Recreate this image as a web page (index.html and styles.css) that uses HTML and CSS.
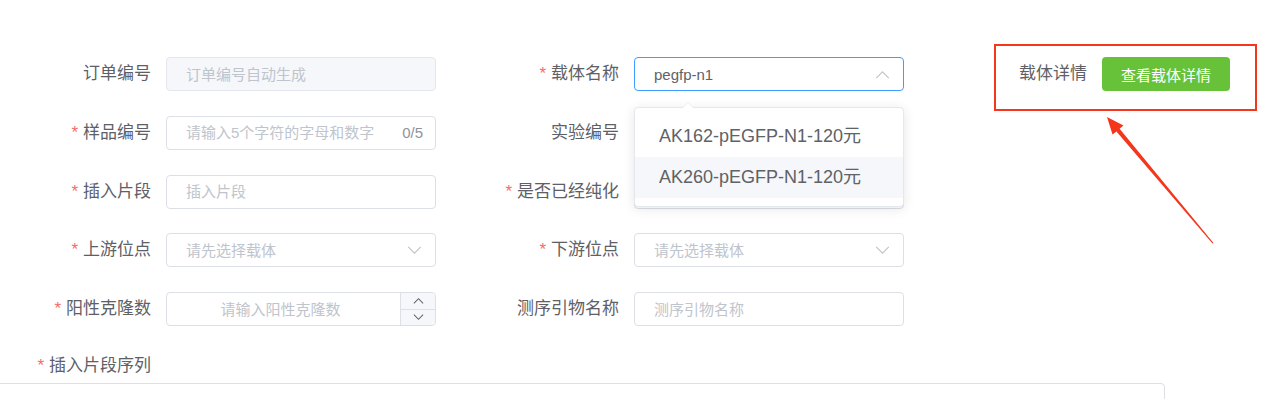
FILE: index.html
```html
<!DOCTYPE html>
<html lang="zh-CN">
<head>
    <meta charset="UTF-8">
    <meta name="viewport" content="width=device-width, initial-scale=1.0">
    <title>订单信息</title>
    <link rel="stylesheet" href="styles.css">
</head>
<body>
    <form class="order-form">
        <div class="form-grid">
            <!-- row 1 -->
            <div class="form-item">
                <label class="item-label">订单编号</label>
                <div class="field">
                    <input class="text-input is-disabled" type="text" placeholder="订单编号自动生成" disabled>
                </div>
            </div>
            <div class="form-item">
                <label class="item-label required">载体名称</label>
                <div class="field select is-focus">
                    <input class="text-input" type="text" value="pegfp-n1">
                    <svg class="chevron" viewBox="0 0 16 10"><polyline points="1,9 8,2 15,9"/></svg>
                    <div class="dropdown">
                        <span class="dropdown-arrow"></span>
                        <ul class="dropdown-list">
                            <li class="dropdown-item">AK162-pEGFP-N1-120元</li>
                            <li class="dropdown-item hover">AK260-pEGFP-N1-120元</li>
                        </ul>
                    </div>
                </div>
            </div>
            <div class="form-item">
                <label class="item-label">载体详情</label>
                <button type="button" class="btn-success">查看载体详情</button>
            </div>

            <!-- row 2 -->
            <div class="form-item">
                <label class="item-label required">样品编号</label>
                <div class="field">
                    <input class="text-input with-count" type="text" placeholder="请输入5个字符的字母和数字" maxlength="5">
                    <span class="count">0/5</span>
                </div>
            </div>
            <div class="form-item">
                <label class="item-label">实验编号</label>
                <div class="field">
                    <input class="text-input" type="text" placeholder="实验编号">
                </div>
            </div>
            <div class="form-item"></div>

            <!-- row 3 -->
            <div class="form-item">
                <label class="item-label required">插入片段</label>
                <div class="field">
                    <input class="text-input" type="text" placeholder="插入片段">
                </div>
            </div>
            <div class="form-item">
                <label class="item-label required">是否已经纯化</label>
                <div class="field select">
                    <input class="text-input" type="text" placeholder="请选择">
                    <svg class="chevron" viewBox="0 0 16 10"><polyline points="1,1 8,8 15,1"/></svg>
                </div>
            </div>
            <div class="form-item"></div>

            <!-- row 4 -->
            <div class="form-item">
                <label class="item-label required">上游位点</label>
                <div class="field select">
                    <input class="text-input" type="text" placeholder="请先选择载体">
                    <svg class="chevron" viewBox="0 0 16 10"><polyline points="1,1 8,8 15,1"/></svg>
                </div>
            </div>
            <div class="form-item">
                <label class="item-label required">下游位点</label>
                <div class="field select">
                    <input class="text-input" type="text" placeholder="请先选择载体">
                    <svg class="chevron" viewBox="0 0 16 10"><polyline points="1,1 8,8 15,1"/></svg>
                </div>
            </div>
            <div class="form-item"></div>

            <!-- row 5 -->
            <div class="form-item">
                <label class="item-label required">阳性克隆数</label>
                <div class="field number">
                    <input class="text-input centered" type="text" placeholder="请输入阳性克隆数">
                    <div class="steppers">
                        <span class="step">
                            <svg viewBox="0 0 12 8"><polyline points="1,6.5 6,1.5 11,6.5"/></svg>
                        </span>
                        <span class="step">
                            <svg viewBox="0 0 12 8"><polyline points="1,1.5 6,6.5 11,1.5"/></svg>
                        </span>
                    </div>
                </div>
            </div>
            <div class="form-item">
                <label class="item-label">测序引物名称</label>
                <div class="field">
                    <input class="text-input" type="text" placeholder="测序引物名称">
                </div>
            </div>
            <div class="form-item"></div>
        </div>

        <div class="block-item">
            <label class="item-label required">插入片段序列</label>
            <textarea class="textarea"></textarea>
        </div>
    </form>

    <!-- annotation drawn over the page -->
    <svg class="annotation" viewBox="0 0 1269 399">
        <rect x="995" y="45" width="261" height="65" fill="none" stroke="#f4361d" stroke-width="2"/>
        <polygon fill="#f4361d" points="1107,117 1123.5,125.5 1119.6,128.8 1213.5,243 1212.5,243.5 1116.4,131.4 1112.5,134.5"/>
    </svg>
</body>
</html>
```

FILE: styles.css
```css
html, body {
    margin: 0;
    padding: 0;
    overflow: hidden;
    background-color: #fff;
}

body {
    font-family: "Liberation Sans", "Noto Sans CJK SC", sans-serif;
    color: #606266;
    position: relative;
    width: 1269px;
    height: 399px;
}

.order-form {
    padding: 57px 0 0 1px;
}

.form-grid {
    display: grid;
    grid-template-columns: 435px 435px 435px;
    column-gap: 33px;
    row-gap: 24.75px;
}

.form-item {
    display: flex;
    align-items: center;
    height: 34px;
}

.item-label {
    display: block;
    flex: none;
    width: 165px;
    box-sizing: border-box;
    padding-right: 15px;
    text-align: right;
    font-size: 17px;
    line-height: 34px;
    color: #5e6066;
    white-space: nowrap;
}

.item-label.required::before {
    content: "*";
    color: #f56c6c;
    margin-right: 5px;
}

.field {
    position: relative;
    width: 270px;
    height: 34px;
}

.text-input {
    width: 100%;
    height: 34px;
    box-sizing: border-box;
    border: 1px solid #dcdfe6;
    border-radius: 4px;
    padding: 0 19px;
    font-family: inherit;
    font-size: 15px;
    color: #606266;
    background-color: #fff;
    outline: none;
}

.text-input::placeholder {
    color: #c0c4cc;
}

.text-input.is-disabled {
    background-color: #f5f7fa;
    border-color: #e4e7ed;
}

.text-input.with-count {
    padding-right: 50px;
}

.text-input.centered {
    text-align: center;
    padding: 0 56px 0 15px;
}

.select .text-input {
    padding-right: 40px;
}

.is-focus .text-input {
    border-color: #409eff;
}

.count {
    position: absolute;
    right: 13px;
    top: 0;
    line-height: 34px;
    font-size: 15px;
    color: #909399;
}

.chevron {
    position: absolute;
    right: 14px;
    top: 13px;
    width: 15px;
    height: 9px;
    fill: none;
    stroke: #c0c4cc;
    stroke-width: 1.3;
}

.steppers {
    position: absolute;
    top: 1px;
    right: 1px;
    bottom: 1px;
    width: 34px;
    display: flex;
    flex-direction: column;
    background-color: #f5f7fa;
    border-left: 1px solid #dcdfe6;
    border-radius: 0 3px 3px 0;
}

.step {
    flex: 1;
    display: flex;
    align-items: center;
    justify-content: center;
}

.step + .step {
    border-top: 1px solid #dcdfe6;
}

.step svg {
    width: 11px;
    height: 8px;
    fill: none;
    stroke: #606266;
    stroke-width: 1.1;
}

.btn-success {
    width: 128px;
    height: 34px;
    border: none;
    border-radius: 4px;
    background-color: #67c23a;
    color: #fff;
    font-family: inherit;
    font-size: 15px;
    cursor: pointer;
}

.dropdown {
    position: absolute;
    top: 50px;
    left: 0;
    width: 270px;
    box-sizing: border-box;
    background-color: #fff;
    border: 1px solid #e4e7ed;
    border-radius: 4px;
    box-shadow: 0 2px 12px rgba(0, 0, 0, 0.1);
    z-index: 10;
}

.dropdown-arrow {
    position: absolute;
    top: -6px;
    left: 47px;
    width: 0;
    height: 0;
    border-left: 6px solid transparent;
    border-right: 6px solid transparent;
    border-bottom: 6px solid #ebeef5;
}

    .dropdown-arrow::after {
        content: "";
        position: absolute;
        left: -5px;
        top: 1px;
        border-left: 5px solid transparent;
        border-right: 5px solid transparent;
        border-bottom: 5px solid #fff;
    }

.dropdown-list {
    list-style: none;
    margin: 0;
    padding: 8px 0;
}

.dropdown-item {
    height: 41px;
    line-height: 41px;
    padding: 0 24px;
    font-size: 18px;
    color: #606266;
    white-space: nowrap;
}

    .dropdown-item.hover {
        background-color: #f5f7fa;
    }

.block-item {
    margin-top: 23px;
}

.textarea {
    display: block;
    margin-left: -20px;
    width: 1184px;
    height: 100px;
    box-sizing: border-box;
    border: 1px solid #dcdfe6;
    border-radius: 4px;
    resize: none;
    outline: none;
}

.annotation {
    position: absolute;
    top: 0;
    left: 0;
    width: 1269px;
    height: 399px;
    pointer-events: none;
}
```
